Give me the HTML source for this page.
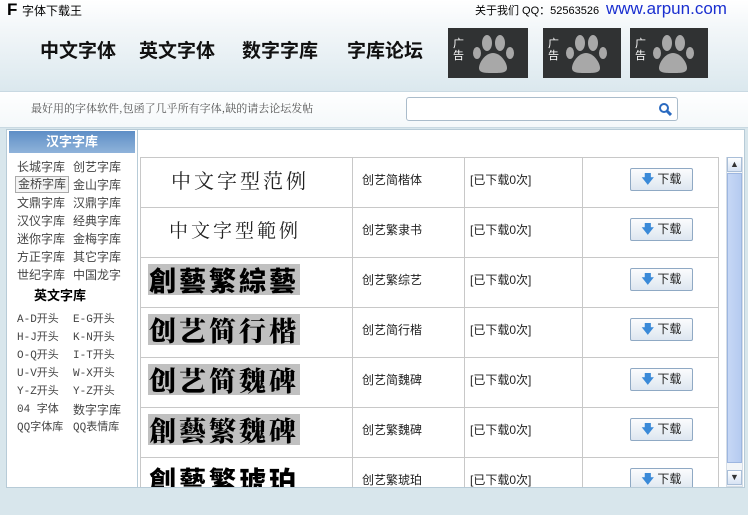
<!DOCTYPE html>
<html><head><meta charset="utf-8"><style>
*{margin:0;padding:0;box-sizing:border-box}
body{width:748px;height:515px;overflow:hidden;position:relative;font-family:"Liberation Sans","Noto Sans CJK SC",sans-serif;background:#d8e6ec}
.abs{position:absolute}
#top{left:0;top:0;width:748px;height:91px;background:linear-gradient(#fff,#f3f7f9 30%,#dbe8ee)}
.nav{top:36px;font-size:19px;font-weight:bold;color:#111}
.ad{top:28px;width:80px;height:50px;background:#303233}
.ad span{position:absolute;left:5px;top:10px;color:#fff;font-size:11px;line-height:12px;width:12px}
#search{left:0;top:91px;width:748px;height:37px;background:linear-gradient(#fff,#f4f8fa);border-top:1px solid #c9d9e2;border-bottom:1px solid #c9d9e2}
#left{left:6px;top:129px;width:132px;height:359px;background:#fff;border:1px solid #b7cbd7}
#lh{left:2px;top:1px;width:126px;height:22px;background:linear-gradient(#5e8ec6,#8fb3da);color:#fff;font-weight:bold;font-size:13px;text-align:center;line-height:22px}
.l{position:absolute;font-size:12px;color:#444;line-height:18px}
.e{position:absolute;font-family:"Liberation Mono","Noto Sans CJK SC",monospace;font-size:11px;color:#444;line-height:18px}
#main{left:138px;top:129px;width:607px;height:359px;background:#fff;border:1px solid #b7cbd7;border-left:none}
table{position:absolute;left:140px;top:157px;border-collapse:collapse}
td{border:1px solid #c8c8c8;height:50px;font-size:12px;color:#222;vertical-align:middle;padding:0 0 6px 0}
.btn{display:inline-block;width:63px;height:23px;border:1px solid #8fa9c4;border-radius:2px;background:linear-gradient(#fbfcfd,#dde6f0);font-size:12px;line-height:21px;text-align:center;margin-left:47px}
.btn b{color:#3b8ad8;font-size:12px}
.s{display:inline-block;font-family:"Noto Serif CJK SC",serif;font-size:20px;letter-spacing:3px}
.g{display:inline-block;background:#c0c0c0;color:#000;font-family:"Noto Serif CJK SC",serif;font-weight:900;font-size:27px;letter-spacing:3px;line-height:31px;padding:0 1px;margin-left:7px}
</style></head><body>
<div id="top" class="abs"></div>
<div class="abs" style="left:7px;top:0;font-size:17px;font-weight:bold">F</div>
<div class="abs" style="left:22px;top:2px;font-size:12px">字体下载王</div>
<div class="abs" style="left:475px;top:2px;font-size:11px">关于我们 QQ：52563526</div>
<div class="abs" style="left:606px;top:-1px;font-size:17px;color:#1a2fd0">www.arpun.com</div>
<div class="abs nav" style="left:40px">中文字体</div>
<div class="abs nav" style="left:139px">英文字体</div>
<div class="abs nav" style="left:242px">数字字库</div>
<div class="abs nav" style="left:347px">字库论坛</div>
<div class="abs ad" style="left:448px"><span>广告</span><svg class="abs" style="left:22px;top:5px" width="50" height="42" viewBox="0 0 50 42" fill="#a8a8a8"><ellipse cx="17" cy="10" rx="5" ry="8"/><ellipse cx="30" cy="10" rx="5" ry="8"/><ellipse cx="7" cy="20" rx="4" ry="6"/><ellipse cx="40" cy="20" rx="4" ry="6"/><path d="M23 20c8 0 14 10 14 15s-6 5-14 5-14 0-14-5 6-15 14-15z"/></svg></div>
<div class="abs ad" style="left:543px;width:78px"><span>广告</span><svg class="abs" style="left:20px;top:5px" width="50" height="42" viewBox="0 0 50 42" fill="#a8a8a8"><ellipse cx="17" cy="10" rx="5" ry="8"/><ellipse cx="30" cy="10" rx="5" ry="8"/><ellipse cx="7" cy="20" rx="4" ry="6"/><ellipse cx="40" cy="20" rx="4" ry="6"/><path d="M23 20c8 0 14 10 14 15s-6 5-14 5-14 0-14-5 6-15 14-15z"/></svg></div>
<div class="abs ad" style="left:630px;width:78px"><span>广告</span><svg class="abs" style="left:20px;top:5px" width="50" height="42" viewBox="0 0 50 42" fill="#a8a8a8"><ellipse cx="17" cy="10" rx="5" ry="8"/><ellipse cx="30" cy="10" rx="5" ry="8"/><ellipse cx="7" cy="20" rx="4" ry="6"/><ellipse cx="40" cy="20" rx="4" ry="6"/><path d="M23 20c8 0 14 10 14 15s-6 5-14 5-14 0-14-5 6-15 14-15z"/></svg></div>
<div id="search" class="abs"></div>
<div class="abs" style="left:31px;top:100px;font-size:11px;color:#555;font-family:'Noto Serif CJK SC',serif">最好用的字体软件,包函了几乎所有字体,缺的请去论坛发帖</div>
<div class="abs" style="left:406px;top:97px;width:272px;height:24px;background:#fff;border:1px solid #aabccb;border-radius:3px"><svg class="abs" style="left:251px;top:4px" width="14" height="14"><circle cx="6" cy="6" r="4" fill="none" stroke="#2a6ac0" stroke-width="2"/><path d="M9 9l4 4" stroke="#2a6ac0" stroke-width="3"/></svg></div>
<div id="left" class="abs">
<div id="lh" class="abs">汉字字库</div>
<div class="l" style="left:10px;top:28px">长城字库</div><div class="l" style="left:66px;top:28px">创艺字库</div>
<div class="l" style="left:8px;top:46px;border:1px solid #aaa;background:#f4f4f4;padding:0 2px;line-height:15px">金桥字库</div><div class="l" style="left:66px;top:46px">金山字库</div>
<div class="l" style="left:10px;top:64px">文鼎字库</div><div class="l" style="left:66px;top:64px">汉鼎字库</div>
<div class="l" style="left:10px;top:82px">汉仪字库</div><div class="l" style="left:66px;top:82px">经典字库</div>
<div class="l" style="left:10px;top:100px">迷你字库</div><div class="l" style="left:66px;top:100px">金梅字库</div>
<div class="l" style="left:10px;top:118px">方正字库</div><div class="l" style="left:66px;top:118px">其它字库</div>
<div class="l" style="left:10px;top:136px">世纪字库</div><div class="l" style="left:66px;top:136px">中国龙字</div>
<div class="l" style="left:27px;top:157px;font-weight:bold;color:#000;font-size:13px">英文字库</div>
<div class="e" style="left:10px;top:181px">A-D开头</div><div class="e" style="left:66px;top:181px">E-G开头</div>
<div class="e" style="left:10px;top:199px">H-J开头</div><div class="e" style="left:66px;top:199px">K-N开头</div>
<div class="e" style="left:10px;top:217px">O-Q开头</div><div class="e" style="left:66px;top:217px">I-T开头</div>
<div class="e" style="left:10px;top:235px">U-V开头</div><div class="e" style="left:66px;top:235px">W-X开头</div>
<div class="e" style="left:10px;top:253px">Y-Z开头</div><div class="e" style="left:66px;top:253px">Y-Z开头</div>
<div class="e" style="left:10px;top:271px">04 字体</div><div class="l" style="left:66px;top:271px">数字字库</div>
<div class="e" style="left:10px;top:289px">QQ字体库</div><div class="e" style="left:66px;top:289px">QQ表情库</div>
</div>
<div id="main" class="abs"></div>
<div class="abs" style="left:140px;top:157px;width:580px;height:330px;overflow:hidden">
<table style="left:0;top:0">
<tr><td style="width:212px"><span class="s" style="margin-left:30px">中文字型范例</span></td><td style="width:112px;padding-left:9px">创艺简楷体</td><td style="width:118px;padding-left:5px">[已下载0次]</td><td style="width:136px"><span class="btn"><b>🡇</b> 下载</span></td></tr>
<tr><td><span class="s" style="margin-left:28px;font-size:19px">中文字型範例</span></td><td style="padding-left:9px">创艺繁隶书</td><td style="padding-left:5px">[已下载0次]</td><td><span class="btn"><b>🡇</b> 下载</span></td></tr>
<tr><td><span class="g" style="font-family:'Noto Sans CJK SC',sans-serif">創藝繁綜藝</span></td><td style="padding-left:9px">创艺繁综艺</td><td style="padding-left:5px">[已下载0次]</td><td><span class="btn"><b>🡇</b> 下载</span></td></tr>
<tr><td><span class="g">创艺简行楷</span></td><td style="padding-left:9px">创艺简行楷</td><td style="padding-left:5px">[已下载0次]</td><td><span class="btn"><b>🡇</b> 下载</span></td></tr>
<tr><td><span class="g">创艺简魏碑</span></td><td style="padding-left:9px">创艺简魏碑</td><td style="padding-left:5px">[已下载0次]</td><td><span class="btn"><b>🡇</b> 下载</span></td></tr>
<tr><td><span class="g">創藝繁魏碑</span></td><td style="padding-left:9px">创艺繁魏碑</td><td style="padding-left:5px">[已下载0次]</td><td><span class="btn"><b>🡇</b> 下载</span></td></tr>
<tr><td><span class="g" style="background:none;font-family:'Noto Sans CJK SC',sans-serif">創藝繁琥珀</span></td><td style="padding-left:9px">创艺繁琥珀</td><td style="padding-left:5px">[已下载0次]</td><td><span class="btn"><b>🡇</b> 下载</span></td></tr>
</table></div>
<div class="abs" style="left:726px;top:157px;width:17px;height:330px;background:#f2f5f8;border:1px solid #d5dde6"></div>
<div class="abs" style="left:727px;top:157px;width:15px;height:15px;background:linear-gradient(#fdfefe,#d7e3f4);border:1px solid #a9bed8;font-size:9px;text-align:center;line-height:13px;color:#333">▲</div>
<div class="abs" style="left:727px;top:173px;width:15px;height:290px;background:linear-gradient(90deg,#c6d7f5,#b5cbf0);border:1px solid #9db6e0"></div>
<div class="abs" style="left:727px;top:470px;width:15px;height:15px;background:linear-gradient(#fdfefe,#d7e3f4);border:1px solid #a9bed8;font-size:9px;text-align:center;line-height:13px;color:#333">▼</div>
</body></html>
